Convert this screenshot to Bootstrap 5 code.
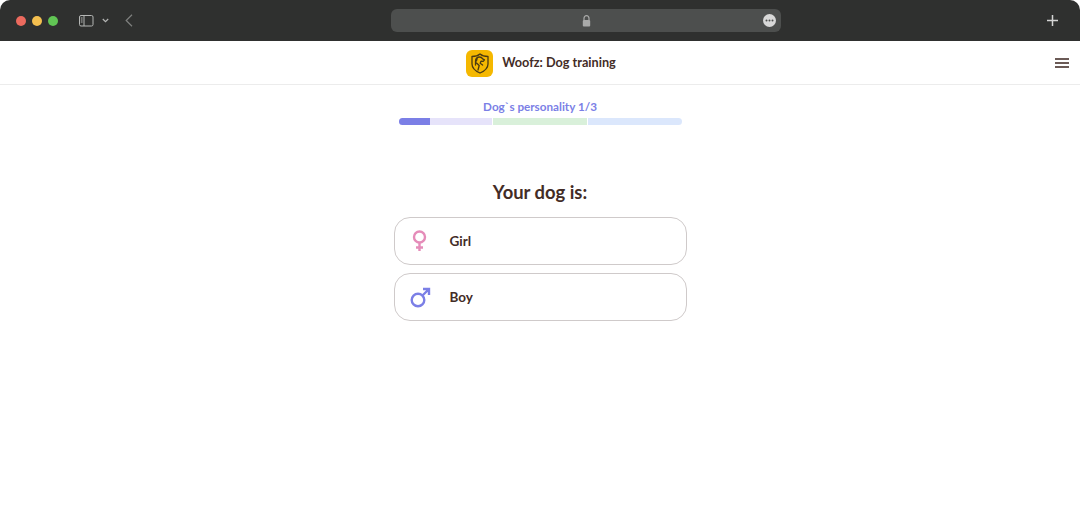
<!DOCTYPE html>
<html lang="en">
<head>
  <meta charset="UTF-8" />
  <title>Woofz: Dog training</title>
  <link href="https://cdn.jsdelivr.net/npm/bootstrap@5.3.0/dist/css/bootstrap.min.css" rel="stylesheet" />
  <style>
    html, body {
      height: 519px;
      overflow: hidden;
      background: #fff;
    }
    body {
      font-family: Lato, "Noto Sans", sans-serif;
      color: #432c26;
    }
    .chrome-bar {
      height: 41px;
      background: #2f302f;
      border-radius: 10px 10px 0 0;
      padding: 0 22px 0 16px;
    }
    .dot-group {
      gap: 6px;
    }
    .dot {
      width: 10px;
      height: 10px;
      border-radius: 50%;
    }
    .dot-red { background: #ec6a5e; }
    .dot-yellow { background: #f4bf4f; }
    .dot-green { background: #61c554; }
    .chrome-left {
      width: 375px;
    }
    .sidebar-icon { margin-left: 21px; }
    .sidebar-caret { margin-left: 8px; }
    .back-icon { margin-left: 16px; }
    .address-bar {
      width: 390px;
      height: 23px;
      background: #4d4f4e;
      border-radius: 6px;
      padding-right: 5px;
    }
    .address-lock {
      margin-left: 18px;
    }
    .app-header {
      height: 44px;
      padding-top: 1px;
      border-bottom: 1px solid #ececec;
    }
    .logo-box {
      width: 27px;
      height: 27px;
      border-radius: 6px;
      background: #f5b800;
    }
    .brand-row {
      gap: 9px;
      margin-left: 2px;
    }
    .brand-name {
      font-size: 12.7px;
      font-weight: 700;
    }
    .menu-btn {
      right: 11px;
      top: 17px;
      width: 14px;
      height: 10px;
      border-top: 2px solid #6b5a56;
      border-bottom: 2px solid #6b5a56;
    }
    .menu-btn::after {
      content: "";
      display: block;
      height: 2px;
      margin-top: 2px;
      background: #6b5a56;
    }
    .quiz-box {
      width: 293px;
    }
    .step-label {
      margin-top: 12px;
      height: 18px;
      line-height: 18px;
      font-size: 11.7px;
      font-weight: 700;
      color: #7b7fe6;
    }
    .step-bar {
      width: 283px;
      height: 7px;
      margin-top: 3px;
      gap: 1px;
      border-radius: 4px;
      overflow: hidden;
    }
    .step-part {
      flex: 1 1 0;
    }
    .step-a { background: #e6e3fa; }
    .step-b { background: #d9f0da; }
    .step-c { background: #dbe7fc; }
    .step-fill {
      width: 34%;
      height: 100%;
      background: #7b7fe6;
    }
    .quiz-title {
      margin: 55px 0 13px;
      height: 24px;
      line-height: 24px;
      font-size: 18.4px;
      font-weight: 700;
    }
    .answer-row {
      height: 48px;
      border: 1px solid #cfcaca;
      border-radius: 16px;
      background: #fff;
      padding-left: 14px;
      margin-bottom: 8px;
      font-size: 13.5px;
      font-weight: 700;
      color: #432c26;
    }
    .answer-icon {
      width: 22px;
      margin-right: 19px;
    }
  </style>
</head>
<body>
  <div class="chrome-bar d-flex align-items-center">
    <div class="chrome-left d-flex align-items-center">
      <div class="dot-group d-flex">
        <span class="dot dot-red"></span>
        <span class="dot dot-yellow"></span>
        <span class="dot dot-green"></span>
      </div>
      <svg class="sidebar-icon" width="15" height="12" viewBox="0 0 15 12" fill="none" stroke="#b5b6b5">
        <rect x=".5" y=".5" width="13.5" height="10.5" rx="1.5"/>
        <path d="M5 .5v10.5M1.8 3h1.8M1.8 5h1.8M1.8 7h1.8"/>
      </svg>
      <svg class="sidebar-caret" width="7" height="5" viewBox="0 0 7 5" fill="none" stroke="#b5b6b5" stroke-width="1.2">
        <path d="M.8 1l2.7 2.7L6.2 1"/>
      </svg>
      <svg class="back-icon" width="8" height="13" viewBox="0 0 8 13" fill="none" stroke="#7f807f" stroke-width="1.2">
        <path d="M7 .8L1.200 6.500 7 12.200"/>
      </svg>
    </div>
    <div class="address-bar d-flex align-items-center">
      <div class="address-lock flex-grow-1 d-flex justify-content-center">
        <svg width="9" height="12" viewBox="0 0 9 12">
          <path d="M2 5V3.200a2.500 2.500 0 0 1 5 0V5" fill="none" stroke="#a9aaa9" stroke-width="1.200"/>
          <rect x=".8" y="5" width="7.400" height="6.400" rx="1" fill="#a9aaa9"/>
        </svg>
      </div>
      <svg width="13" height="13" viewBox="0 0 13 13">
        <circle cx="6.500" cy="6.500" r="6.500" fill="#d8d8d8"/>
        <circle cx="3.500" cy="6.500" r="1" fill="#4d4f4e"/>
        <circle cx="6.500" cy="6.500" r="1" fill="#4d4f4e"/>
        <circle cx="9.500" cy="6.500" r="1" fill="#4d4f4e"/>
      </svg>
    </div>
    <svg class="ms-auto" width="11" height="11" viewBox="0 0 11 11" stroke="#d4d4d4" stroke-width="1.500">
      <path d="M5.500 0v11M0 5.500h11"/>
    </svg>
  </div>

  <header class="app-header position-relative d-flex align-items-center justify-content-center">
    <div class="brand-row d-flex align-items-center">
      <div class="logo-box d-flex align-items-center justify-content-center">
        <svg width="18" height="21" viewBox="0 0 18 21" fill="none" stroke="#4a3a12" stroke-width="1.300" stroke-linejoin="round" stroke-linecap="round">
          <path d="M1 3.500C4.500 3.500 7 2.800 9 1c2 1.800 4.500 2.500 8 2.500v7.500c0 4.200-3.300 7-8 9-4.700-2-8-4.800-8-9z"/>
          <path d="M4.500 12V8c0-2.500 1.800-4 4-4 1.500 0 2.500 .7 3.200 1.900l1.800 1-1.300 1.500-2.200-.2-.8 2 2.400 1.800M7 17l1.200-4.500L5.500 10M6.300 5l-.9 3"/>
        </svg>
      </div>
      <span class="brand-name">Woofz: Dog training</span>
    </div>
    <div class="menu-btn position-absolute"></div>
  </header>

  <main class="d-flex justify-content-center">
    <div class="quiz-box text-center d-flex flex-column align-items-center">
      <div class="step-label">Dog`s personality 1/3</div>
      <div class="step-bar d-flex">
        <div class="step-part step-a"><div class="step-fill"></div></div>
        <div class="step-part step-b"></div>
        <div class="step-part step-c"></div>
      </div>
      <div class="quiz-title">Your dog is:</div>
      <div class="answer-row w-100 d-flex align-items-center">
        <svg class="answer-icon" height="22" viewBox="0 0 22 22" fill="none" stroke="#e58cb9" stroke-width="2.400">
          <circle cx="10.500" cy="7" r="5.500"/>
          <path d="M10.500 12.500v8.500M7 17.500h7"/>
        </svg>
        <span>Girl</span>
      </div>
      <div class="answer-row w-100 d-flex align-items-center">
        <svg class="answer-icon" height="22" viewBox="0 0 22 22" fill="none" stroke="#7b7fe6" stroke-width="2.400">
          <circle cx="9" cy="14" r="6.300"/>
          <path d="M13.500 9.500L19.500 3.500M14 3h6v6"/>
        </svg>
        <span>Boy</span>
      </div>
    </div>
  </main>

  <script src="https://cdn.jsdelivr.net/npm/bootstrap@5.3.0/dist/js/bootstrap.bundle.min.js"></script>
</body>
</html>
